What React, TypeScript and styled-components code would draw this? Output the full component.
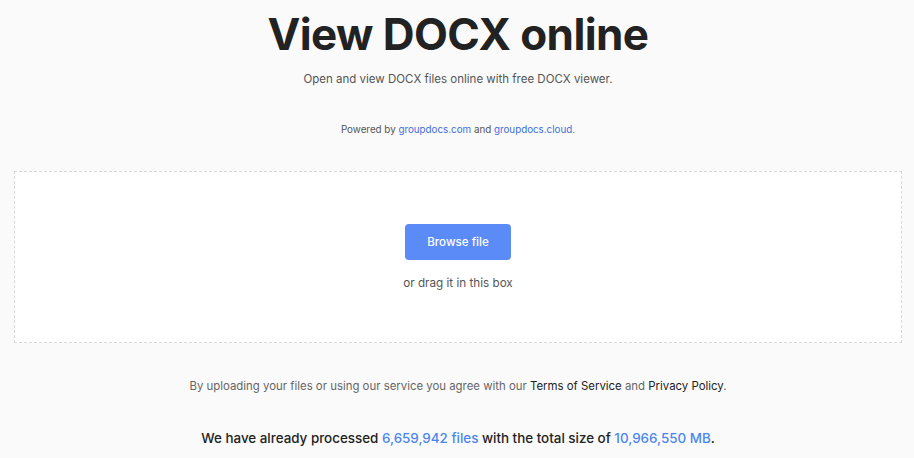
import React from "react";
import styled, { createGlobalStyle } from "styled-components";

const Global = createGlobalStyle`
  html, body { margin: 0; padding: 0; background: #fafafa; }
  body { font-family: Inter, "Noto Sans", sans-serif; color: #222; }
  * { box-sizing: border-box; }
`;

const Page = styled.main`
  display: flex;
  flex-direction: column;
  align-items: center;
  padding: 0 12px 0 14px;
`;

const Title = styled.h1`
  margin: 8px 0 0;
  font-size: 44px;
  line-height: 52px;
  font-weight: 700;
  color: #222;
  letter-spacing: -0.6px;
`;

const Subtitle = styled.p`
  margin: 11px 0 0;
  font-size: 11.5px;
  line-height: 16px;
  color: #555;
`;

const Powered = styled.p`
  margin: 36px 0 0;
  font-size: 9.8px;
  line-height: 14px;
  color: #555;
`;

const Link = styled.a<{ $dark?: boolean }>`
  color: ${(p) => (p.$dark ? "#222" : "#3e6fe0")};
  text-decoration: none;
`;

const DropZone = styled.section`
  margin-top: 34px;
  width: 100%;
  height: 172px;
  background: #fff;
  border: 1px dashed #d8d8d8;
  display: flex;
  flex-direction: column;
  align-items: center;
  justify-content: center;
  gap: 15px;
  padding-top: 1px;
`;

const Button = styled.button`
  width: 106px;
  height: 36px;
  border: none;
  border-radius: 4px;
  background: #5b8bf6;
  color: #fff;
  font-family: inherit;
  font-size: 11.6px;
  font-weight: 500;
  cursor: pointer;
`;

const Hint = styled.span`
  font-size: 11.7px;
  line-height: 16px;
  color: #555;
`;

const Terms = styled.p`
  margin: 35px 0 0;
  font-size: 11.4px;
  line-height: 16px;
  color: #666;
`;

const Stats = styled.p`
  margin: 35px 0 0;
  font-size: 13.4px;
  line-height: 18px;
  font-weight: 500;
  color: #222;
`;

const Num = styled.span`
  color: #4a86f0;
`;

export default function App() {
  return (
    <>
      <Global />
      <Page>
        <Title>View DOCX online</Title>
        <Subtitle>Open and view DOCX files online with free DOCX viewer.</Subtitle>
        <Powered>
          Powered by <Link href="#">groupdocs.com</Link> and{" "}
          <Link href="#">groupdocs.cloud</Link>.
        </Powered>
        <DropZone>
          <Button>Browse file</Button>
          <Hint>or drag it in this box</Hint>
        </DropZone>
        <Terms>
          By uploading your files or using our service you agree with our{" "}
          <Link $dark href="#">Terms of Service</Link> and{" "}
          <Link $dark href="#">Privacy Policy</Link>.
        </Terms>
        <Stats>
          We have already processed <Num>6,659,942 files</Num> with the total
          size of <Num>10,966,550 MB</Num>.
        </Stats>
      </Page>
    </>
  );
}
